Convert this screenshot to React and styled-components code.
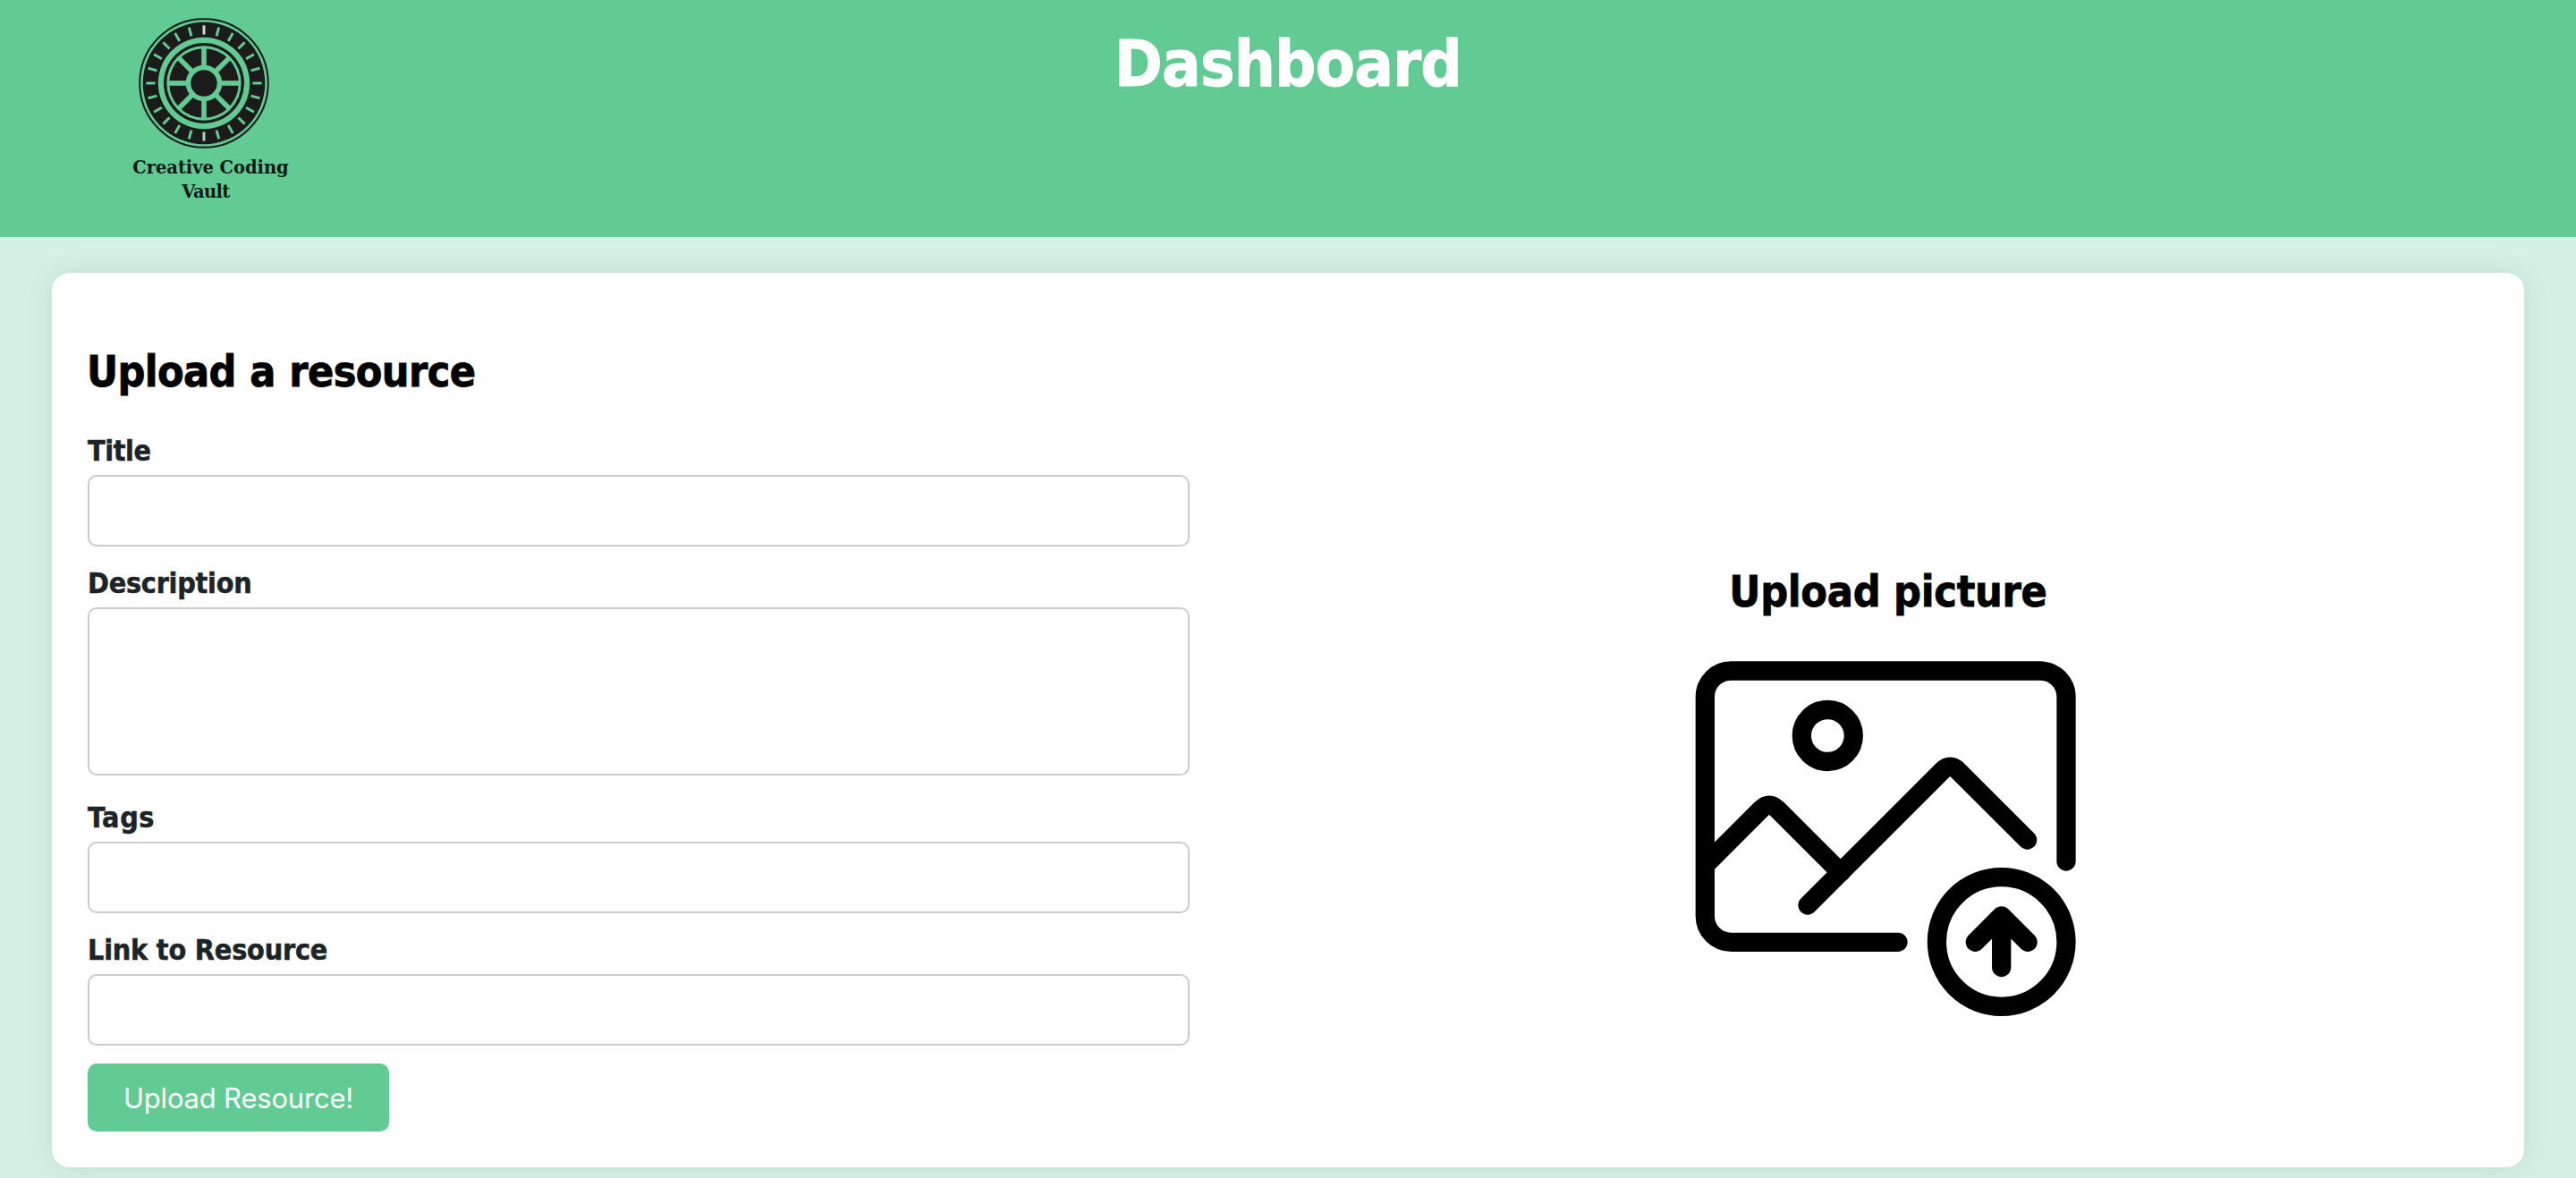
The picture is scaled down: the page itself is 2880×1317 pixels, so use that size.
import React from 'react';
import styled, { createGlobalStyle } from 'styled-components';

const GREEN = '#62cb93';
const INK = '#1b1b1b';

const GlobalStyle = createGlobalStyle`
  *, *::before, *::after { box-sizing: border-box; }
  body {
    margin: 0;
    min-height: 1317px;
    background: #d5f1e5;
    font-family: "DejaVu Sans Condensed", "DejaVu Sans", sans-serif;
    font-stretch: condensed;
    overflow: hidden;
  }
`;

const Header = styled.header`
  display: grid;
  grid-template-columns: 1fr auto 1fr;
  align-items: start;
  height: 265px;
  background: ${GREEN};
`;

const Brand = styled.div`
  display: flex;
  flex-direction: column;
  align-items: center;
  justify-self: start;
  width: 175px;
  margin-left: 148px;
  padding-top: 18px;
`;

const Wheel = styled.svg`
  display: block;
  width: 150px;
  height: 150px;
  margin-right: 15px;
`;

const BrandName = styled.div`
  font-family: "DejaVu Serif", serif;
  font-stretch: normal;
  font-weight: 700;
  font-size: 19.5px;
  line-height: 26px;
  letter-spacing: ${(p) => p.$spacing};
  margin: ${(p) => p.$margin};
  color: #0c1a13;
  white-space: nowrap;
`;

const PageTitle = styled.h1`
  margin: 27px 0 0;
  color: #fff;
  font-size: 72px;
  line-height: 88px;
  letter-spacing: -0.8px;
  -webkit-text-stroke: 0.9px #fff;
`;

const Card = styled.main`
  display: grid;
  grid-template-columns: 1fr 1fr;
  height: 1000px;
  margin: 40px 58px 0;
  padding: 40px;
  border-radius: 20px;
  background: #fff;
  box-shadow: 0 0 32px rgba(0, 0, 0, 0.1);
`;

const Form = styled.form`
  display: flex;
  flex-direction: column;
  align-items: flex-start;
  width: 1232px;
`;

const Heading = styled.h2`
  margin: ${(p) => p.$margin || 0};
  font-size: 48px;
  line-height: 58px;
  letter-spacing: ${(p) => p.$spacing || '-0.25px'};
  word-spacing: ${(p) => p.$wordSpacing || 0};
  color: #000;
  -webkit-text-stroke: 0.8px #000;
`;

const Field = styled.label`
  display: flex;
  flex-direction: column;
  width: 100%;
  margin-bottom: ${(p) => p.$gap || 20}px;
`;

const FieldName = styled.span`
  height: 48px;
  color: #1b2428;
  font-weight: 700;
  font-size: 32px;
  line-height: 42px;
  letter-spacing: ${(p) => p.$spacing || '-0.4px'};
  -webkit-text-stroke: 0.5px #1b2428;
`;

const Input = styled.input`
  width: 100%;
  height: 80px;
  padding: 20px;
  border: 2px solid #ccc;
  border-radius: 10px;
  background: #fff;
  outline: none;
  font: inherit;
`;

const TextArea = styled.textarea`
  display: block;
  width: 100%;
  height: 188px;
  padding: 20px;
  border: 2px solid #ccc;
  border-radius: 10px;
  background: #fff;
  outline: none;
  resize: none;
  font: inherit;
`;

const Submit = styled.button`
  width: 337px;
  height: 76px;
  padding: 0;
  border: 0;
  border-radius: 10px;
  background: ${GREEN};
  color: #fff;
  font-family: Inter, sans-serif;
  font-stretch: normal;
  font-size: 31px;
  letter-spacing: -0.2px;
  white-space: nowrap;
`;

const PicturePanel = styled.section`
  display: flex;
  flex-direction: column;
  align-items: center;
  padding-top: 287px;
`;

const PictureIcon = styled.svg`
  display: block;
  width: 500px;
  height: 430px;
  margin-top: 21px;
  fill: none;
  stroke: #000;
  stroke-width: 21.3;
  stroke-linecap: round;
  stroke-linejoin: round;
`;

const TICKS = Array.from({ length: 24 }, (_, i) => i * 15);
const SPOKES = Array.from({ length: 8 }, (_, i) => i * 45);

function VaultWheel() {
  return (
    <Wheel viewBox="-75 -75 150 150" aria-hidden="true">
      <circle r="71.8" fill="none" stroke={INK} strokeWidth="2" />
      <circle r="68.3" fill={INK} />
      {TICKS.map((a) => (
        <line
          key={a}
          y1="-64.6"
          y2="-54.4"
          stroke={a === 0 ? '#d3d8d5' : a === 180 ? '#a3d6ba' : GREEN}
          strokeWidth="3"
          transform={`rotate(${a})`}
        />
      ))}
      <circle r="51.2" fill={GREEN} />
      <circle r="45" fill={INK} />
      <circle r="41.7" fill={GREEN} />
      <circle r="38.8" fill={INK} />
      {SPOKES.map((a) => (
        <line key={a} y1="-40" y2="-16" stroke={GREEN} strokeWidth="5.6" transform={`rotate(${a})`} />
      ))}
      <circle r="17.5" fill={INK} stroke={GREEN} strokeWidth="5.6" />
    </Wheel>
  );
}

function UploadPicture() {
  return (
    <PictureIcon viewBox="1 101 500 430" aria-hidden="true">
      <path d="M262 443.3H75.3a29 29 0 0 1-29-29V169a29 29 0 0 1 29-29H421a29 29 0 0 1 29 29V353" />
      <circle cx="183.3" cy="212.5" r="29" />
      <path d="M48 355.6L109.5 294.1Q118 286 126.5 294.1L197.8 365.4" />
      <path d="M161 402L311.8 251.3Q320.3 243 328.8 251.3L406.6 329" />
      <circle cx="377.7" cy="443" r="72.3" />
      <path d="M348.3 443.3L377.7 413.9L407.1 443.3M377.7 413.9V471.5" />
    </PictureIcon>
  );
}

export default function App() {
  return (
    <>
      <GlobalStyle />
      <Header>
        <Brand>
          <VaultWheel />
          <BrandName $spacing="-0.05px" $margin="7px 0 1px">Creative Coding</BrandName>
          <BrandName $spacing="-0.6px" $margin="0 11px 0 0">Vault</BrandName>
        </Brand>
        <PageTitle>Dashboard</PageTitle>
      </Header>
      <Card>
        <Form onSubmit={(e) => e.preventDefault()}>
          <Heading $margin="41px 0 39px -1px" $spacing="-0.6px" $wordSpacing="1px">Upload a resource</Heading>
          <Field>
            <FieldName>Title</FieldName>
            <Input />
          </Field>
          <Field $gap={26}>
            <FieldName $spacing="-0.25px">Description</FieldName>
            <TextArea />
          </Field>
          <Field>
            <FieldName $spacing="0.6px">Tags</FieldName>
            <Input />
          </Field>
          <Field>
            <FieldName $spacing="-0.2px">Link to Resource</FieldName>
            <Input />
          </Field>
          <Submit type="submit">Upload Resource!</Submit>
        </Form>
        <PicturePanel>
          <Heading>Upload picture</Heading>
          <UploadPicture />
        </PicturePanel>
      </Card>
    </>
  );
}
